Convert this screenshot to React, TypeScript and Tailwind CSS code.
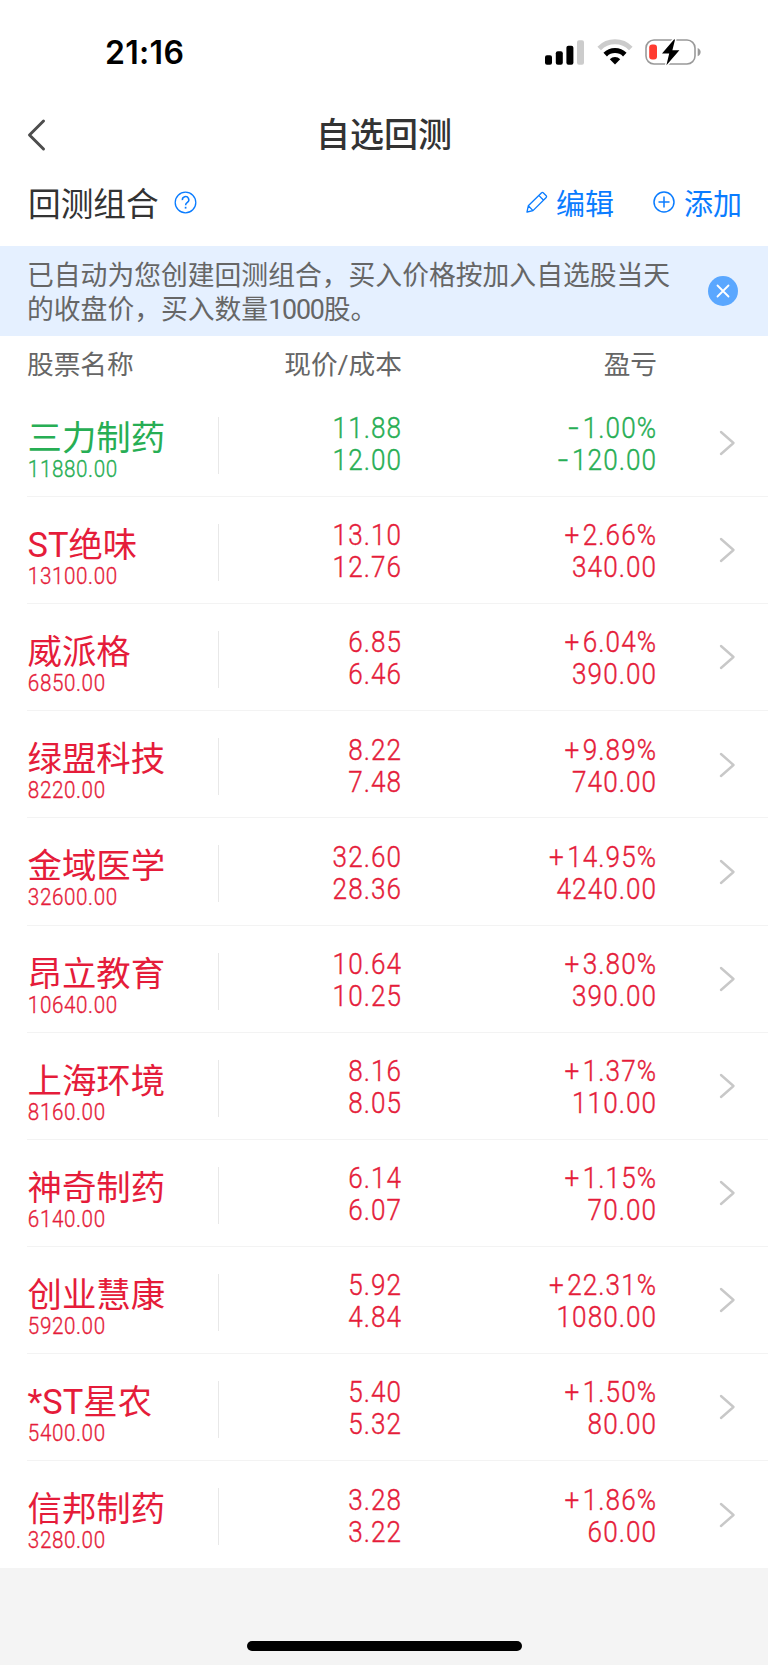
import { clsx } from "clsx"

interface Stock {
  name: string
  value: string
  price: string
  cost: string
  rate: string
  profit: string
}

const stocks: Stock[] = [
  { name: "三力制药", value: "11880.00", price: "11.88", cost: "12.00", rate: "-1.00%", profit: "-120.00" },
  { name: "ST绝味", value: "13100.00", price: "13.10", cost: "12.76", rate: "+2.66%", profit: "340.00" },
  { name: "威派格", value: "6850.00", price: "6.85", cost: "6.46", rate: "+6.04%", profit: "390.00" },
  { name: "绿盟科技", value: "8220.00", price: "8.22", cost: "7.48", rate: "+9.89%", profit: "740.00" },
  { name: "金域医学", value: "32600.00", price: "32.60", cost: "28.36", rate: "+14.95%", profit: "4240.00" },
  { name: "昂立教育", value: "10640.00", price: "10.64", cost: "10.25", rate: "+3.80%", profit: "390.00" },
  { name: "上海环境", value: "8160.00", price: "8.16", cost: "8.05", rate: "+1.37%", profit: "110.00" },
  { name: "神奇制药", value: "6140.00", price: "6.14", cost: "6.07", rate: "+1.15%", profit: "70.00" },
  { name: "创业慧康", value: "5920.00", price: "5.92", cost: "4.84", rate: "+22.31%", profit: "1080.00" },
  { name: "*ST星农", value: "5400.00", price: "5.40", cost: "5.32", rate: "+1.50%", profit: "80.00" },
  { name: "信邦制药", value: "3280.00", price: "3.28", cost: "3.22", rate: "+1.86%", profit: "60.00" },
]

function StatusBar() {
  return (
    <div className="h-[100px] flex items-start justify-between pl-[105px] pr-[66px]">
      <span className="mt-[33px] font-['Inter'] font-semibold text-[32px] leading-[40px] tracking-[0.3px] text-black">21:16</span>
      <div className="mt-[38px] flex items-center">
        <svg width="40" height="26" viewBox="0 0 40 26">
          <rect x="0" y="16.3" width="7" height="9.4" rx="2" fill="#000" />
          <rect x="10.8" y="12.2" width="7" height="13.5" rx="2" fill="#000" />
          <rect x="21.4" y="6.8" width="7" height="18.9" rx="2" fill="#000" />
          <rect x="32" y="1.2" width="7" height="24.5" rx="2" fill="#cccccc" />
        </svg>
        <svg className="ml-[12px]" width="36" height="26" viewBox="0 0 36 26" fill="none">
          <path d="M2.2 9.4A22 22 0 0 1 33.8 9.4" stroke="#cccccc" strokeWidth="5" />
          <path d="M8.2 15.6A14 14 0 0 1 27.8 15.6" stroke="#000" strokeWidth="5" />
          <path d="M18 25.6L12.8 20.2A7.4 7.4 0 0 1 23.2 20.2Z" fill="#000" />
        </svg>
        <svg className="ml-[12px]" width="57" height="28" viewBox="0 0 57 28">
          <rect x="1" y="2" width="49" height="24" rx="8" fill="none" stroke="#999999" strokeWidth="1.6" />
          <path d="M52.7 10C56.6 11.4 56.6 16.8 52.7 18.2Z" fill="#999999" />
          <rect x="4.2" y="6.4" width="7.8" height="15.2" rx="3" fill="#ff3b30" />
          <path
            d="M29.2 1.3L17 15.6H24.2L21.4 27.2L34.4 12.2H27.4L30 1.7Z"
            fill="#000"
            stroke="#fff"
            strokeWidth="3"
            strokeLinejoin="round"
            paintOrder="stroke"
          />
        </svg>
      </div>
    </div>
  )
}

function Amount({ text }: { text: string }) {
  const signed = /^[+-]/.test(text)

  return (
    <div>
      {signed && <span className={clsx("inline-block", text[0] === "-" ? "mr-[5px] scale-x-[1.4]" : "mr-[3px]")}>{text[0]}</span>}
      {signed ? text.slice(1) : text}
    </div>
  )
}

function StockRow({ stock }: { stock: Stock }) {
  const down = stock.rate.startsWith("-")

  return (
    <div className={clsx("ml-[27px] flex h-[107.15px] border-b border-[#f3f3f3] last:border-b-0", down ? "text-[#27ae54]" : "text-[#e51c3a]")}>
      <div className="w-[191px] pt-[29px]">
        <div className="pl-[0.5px] text-[34.4px] leading-[39px] whitespace-nowrap">{stock.name}</div>
        <div className="origin-left scale-x-[0.86] pl-px font-['Roboto'] font-light text-[24px] leading-[22.6px] tracking-[0.7px] [-webkit-text-stroke:0.35px]">{stock.value}</div>
      </div>
      <div className="mt-[27px] h-[57px] w-px bg-[#e8e8e8]" />
      <div className="w-[183px] origin-right scale-x-[0.87] pt-[22.4px] text-right font-['Roboto'] font-light text-[30px] leading-[32px] tracking-[1.2px] [-webkit-text-stroke:0.4px]">
        <Amount text={stock.price} />
        <Amount text={stock.cost} />
      </div>
      <div className="w-[255px] origin-right scale-x-[0.87] pt-[22.4px] text-right font-['Roboto'] font-light text-[30px] leading-[32px] tracking-[1.2px] [-webkit-text-stroke:0.4px]">
        <Amount text={stock.rate} />
        <Amount text={stock.profit} />
      </div>
      <svg className="mt-[40.3px] ml-[61.5px]" width="17" height="26" viewBox="0 0 17 26" fill="none">
        <path d="M2 2L14.5 13L2 24" stroke="#c8c8c8" strokeWidth="2.4" strokeLinecap="round" strokeLinejoin="round" />
      </svg>
    </div>
  )
}

export default function App() {
  return (
    <div className="w-[768px] h-[1665px] flex flex-col bg-[#f4f4f4] font-['Roboto','Noto_Sans_CJK_SC',sans-serif]">
      <div className="h-[246px] bg-white">
        <StatusBar />

        {/* Nav bar */}
        <div className="h-[70px] grid grid-cols-[1fr_auto_1fr] items-center px-[27px]">
          <svg width="20" height="34" viewBox="0 0 20 34" fill="none">
            <path d="M16.5 3L2.5 17L16.5 31" stroke="#4d4d4d" strokeWidth="3" strokeLinecap="round" strokeLinejoin="round" />
          </svg>
          <h1 className="text-[34px] leading-[40px] font-medium text-[#333333]">自选回测</h1>
        </div>

        {/* Portfolio toolbar */}
        <div className="h-[66px] flex items-center pl-[28px] pr-[26px] text-[#0a7cff]">
          <h2 className="pt-[3px] text-[32.7px] leading-[40px] text-[#333333]">回测组合</h2>
          <svg className="ml-[15.5px] mb-[2px]" width="23" height="23" viewBox="0 0 23 23" fill="none" stroke="#0a7cff">
            <circle cx="11.5" cy="11.5" r="10.3" strokeWidth="1.3" />
            <path d="M8.4 9.2A3.2 3.2 0 1 1 13.4 11.4C12 12.4 11.6 12.9 11.6 14.2" strokeWidth="1.5" />
            <path d="M11.6 15.8V17.6" strokeWidth="1.7" />
          </svg>
          <button className="ml-auto flex items-center text-[29px] leading-[40px]">
            <svg className="mr-[8px] mb-[2px]" width="22" height="22" viewBox="0 0 22 22" fill="none" stroke="#0a7cff" strokeWidth="1.3" strokeLinejoin="round">
              <path d="M1 21L2.3 14.8L15.6 1.8Q16.3 1 17.2 1.8L20.2 4.8Q21 5.7 20.2 6.5L7 19.6ZM12.8 4.4L17.6 9.2M2.3 14.8L7 19.6" />
            </svg>
            <span className="pt-[3px]">编辑</span>
          </button>
          <button className="ml-[39px] flex items-center text-[29px] leading-[40px]">
            <svg className="mr-[9px] mb-[2px]" width="22" height="22" viewBox="0 0 22 22" fill="none" stroke="#0a7cff" strokeWidth="1.5">
              <circle cx="11" cy="11" r="10" />
              <path d="M11 5.5V16.5M5.5 11H16.5" />
            </svg>
            <span className="pt-[3px]">添加</span>
          </button>
        </div>
      </div>

      {/* Notice */}
      <div className="h-[90px] flex items-center justify-between bg-[#e5f0ff] pl-[27px] pr-[30px]">
        <p className="pt-[4px] text-[26.8px] leading-[34px] text-[#666666]">
          已自动为您创建回测组合，买入价格按加入自选股当天
          <br />
          的收盘价，买入数量<span className="tracking-[-1.2px]">1000</span>股。
        </p>
        <svg width="30" height="30" viewBox="0 0 30 30">
          <circle cx="15" cy="15" r="15" fill="#5aa7ff" />
          <path d="M9.5 9.5L20.5 20.5M20.5 9.5L9.5 20.5" stroke="#fff" strokeWidth="1.8" strokeLinecap="round" />
        </svg>
      </div>

      {/* Table */}
      <div className="h-[53.8px] flex items-center bg-white pt-[4px] pl-[27px] text-[26.7px] leading-[34px] text-[#666666]">
        <div className="w-[192px]">股票名称</div>
        <div className="w-[183px] text-right">现价/成本</div>
        <div className="w-[255px] text-right">盈亏</div>
      </div>
      <div className="bg-white">
        {stocks.map((stock) => (
          <StockRow key={stock.name} stock={stock} />
        ))}
      </div>

      {/* Home indicator */}
      <div className="flex flex-1 items-end justify-center pb-[14px]">
        <div className="h-[10px] w-[275px] rounded-full bg-black" />
      </div>
    </div>
  )
}
